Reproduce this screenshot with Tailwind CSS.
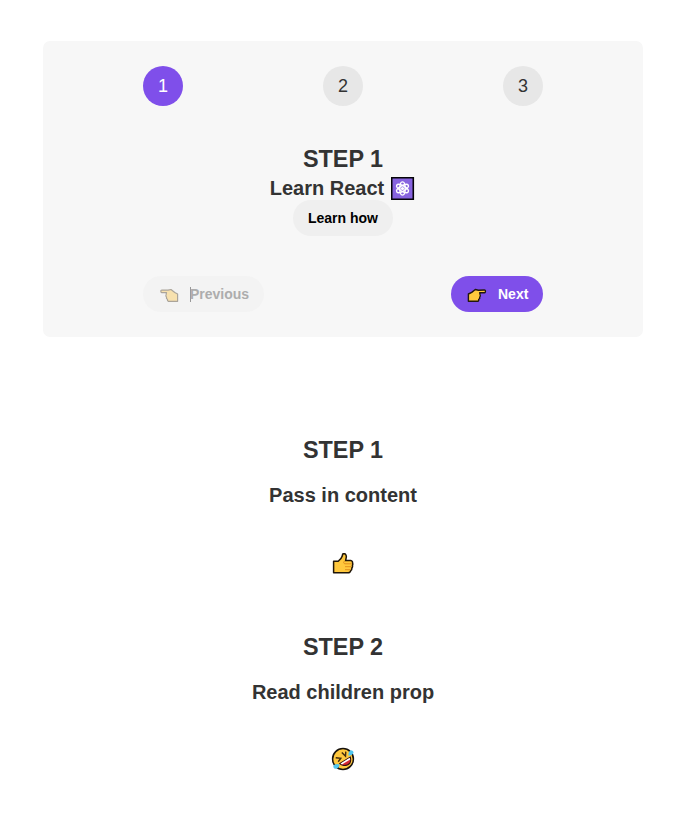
<!DOCTYPE html>
<html lang="en">
<head>
<meta charset="utf-8">
<title>Steps</title>
<script src="https://cdn.jsdelivr.net/npm/@tailwindcss/browser@4"></script>
</head>
<body class="bg-white text-[#333] font-['Liberation_Sans',Arial,sans-serif]">
<main class="w-[686px] h-[830px] pt-[41px] overflow-hidden">
  <section class="mx-auto w-[600px] h-[296px] rounded-[7px] bg-[#f7f7f7] px-[100px] pt-[25px]">
    <div class="flex justify-between text-lg leading-10 text-center">
      <div class="size-10 rounded-full bg-[#7f4fea] text-white">1</div>
      <div class="size-10 rounded-full bg-[#e7e7e7]">2</div>
      <div class="size-10 rounded-full bg-[#e7e7e7]">3</div>
    </div>
    <div class="mt-[40px] h-[90px] flex flex-col items-center font-bold text-xl">
      <h3 class="text-[23.4px] leading-[27px]">STEP 1</h3>
      <div class="h-[27px] flex items-start pr-px">
        <span class="leading-[29px] pt-px">Learn React</span>
        <svg class="ml-[7px] mt-[4px] w-6 h-[23px]" viewBox="0 0 24 23" fill="none">
          <path d="M23.3 0v23" stroke="#ddd"/>
          <rect x=".75" y=".75" width="21.5" height="21.5" fill="#8763df" stroke="#050308" stroke-width="1.5"/>
          <g stroke="#fff" stroke-width="1.4">
            <ellipse cx="11.5" cy="11.5" rx="2.7" ry="6.6"/>
            <ellipse cx="11.5" cy="11.5" rx="2.7" ry="6.6" transform="rotate(60 11.5 11.5)"/>
            <ellipse cx="11.5" cy="11.5" rx="2.7" ry="6.6" transform="rotate(120 11.5 11.5)"/>
          </g>
          <circle cx="11.5" cy="11.5" r="1.6" fill="#fff"/>
        </svg>
      </div>
      <button class="w-[100px] h-9 shrink-0 rounded-full bg-[#efefef] text-black text-sm leading-9 font-bold">Learn how</button>
    </div>
    <div class="mt-[40px] flex justify-between text-sm leading-9 font-bold">
      <button class="w-[121px] h-9 rounded-full bg-[#f3f3f3] text-[#adadad] flex items-center pl-[17px]">
        <svg class="w-5 h-4 mt-[4px]" viewBox="0 0 20 16" fill="#f7e1ae" stroke="#aaa49a" stroke-width="1.2" stroke-linejoin="round">
          <path d="M1 4Q.4 2 2 2L8 2.2 11 1.5 14.8 4.4 17.6 6V13.3H8.2Q7.2 12.7 7.5 11.4 6 10.8 6.5 9.2 5.3 8.2 6.2 6.2L6.5 4.7H2Q1.2 4.7 1 4Z"/>
        </svg>
        <span class="ml-[10px] h-[15px] leading-[15px] w-0 border-l border-[#999]"></span>
        <span class="-ml-px">Previous</span>
      </button>
      <button class="w-[92px] h-9 rounded-full bg-[#7f4fea] text-white flex items-center pl-[16px]">
        <svg class="w-5 h-4 mt-[4px]" viewBox="0 0 20 16" fill="#ffc83d" stroke="#21170f" stroke-width="1.4" stroke-linejoin="round">
          <path d="M18.3 4Q18.8 2 17.3 2L11.5 2.2 8.3 1.5 4.7 4.4 1.4 6V13.3H11Q12 12.7 11.7 11.4 13.2 10.8 12.7 9.2 13.9 8.2 13 6.2L12.7 4.7H17.3Q18.1 4.7 18.3 4Z"/>
        </svg>
        <span class="ml-[11px]">Next</span>
      </button>
    </div>
  </section>

  <section class="mt-[100px] h-[197px] flex flex-col items-center font-bold text-xl">
    <h3 class="text-[23.4px] leading-[27px]">STEP 1</h3>
    <p class="mt-[20px] leading-[23px]">Pass in content</p>
    <svg class="mt-[46px] w-[22px] h-[22px]" viewBox="0 0 22 22" fill="none">
      <path d="M1.6 8.3H6.1Q9.3 6.2 10.3 3.1L10.6 1.3Q11.5.1 13.3 1 14.7 2.5 14.2 4.7L13.6 7.6H18.7Q20.9 8 20.5 9.8 21.1 11.1 20.4 12.4 20.9 14 19.8 15.1 20.1 16.8 18.7 17.6 18.3 19.8 16 19.8H1.6Z" fill="#ffc83d" stroke="#201608" stroke-width="1.5" stroke-linejoin="round"/>
      <path d="M12.5 10.8H19.7M13 13.7H19M13 16.7H18.5M12.5 8Q10.8 9.5 12.5 10.8" stroke="#e08e1c"/>
    </svg>
  </section>
  <section class="h-[197px] flex flex-col items-center font-bold text-xl">
    <h3 class="text-[23.4px] leading-[27px]">STEP 2</h3>
    <p class="mt-[20px] leading-[23px]">Read children prop</p>
    <svg class="mt-[43px] size-6" viewBox="0 0 24 24" fill="none">
      <circle cx="12" cy="12" r="10.4" fill="#ffc83d" stroke="#17120c" stroke-width="1.5"/>
      <path d="M19.3 10.2Q21.3 18.5 12.7 18.5 10.3 18.2 8.7 16.7Z" fill="#d62532" stroke="#301010" stroke-width="1.1"/>
      <path d="M18.7 10.8L19.2 12.4 11 17.4 9.5 16.6Z" fill="#fff"/>
      <path d="M4.7 10.7L9.8 11.3 7.2 14.7M10.8 5.5L14.5 9.1 14.8 4.6" stroke="#422b0d" stroke-width="1.4"/>
      <path d="M17.6 8.8Q16.8 4.5 19.8 3.2 22.7 3.4 22.5 6 21.3 8.6 17.6 8.8ZM8.6 17.4Q4 16 2.4 18.8 2 21.6 5.2 21.8 8 21 8.6 17.4Z" fill="#50c6ef"/>
    </svg>
  </section>
</main>
</body>
</html>
